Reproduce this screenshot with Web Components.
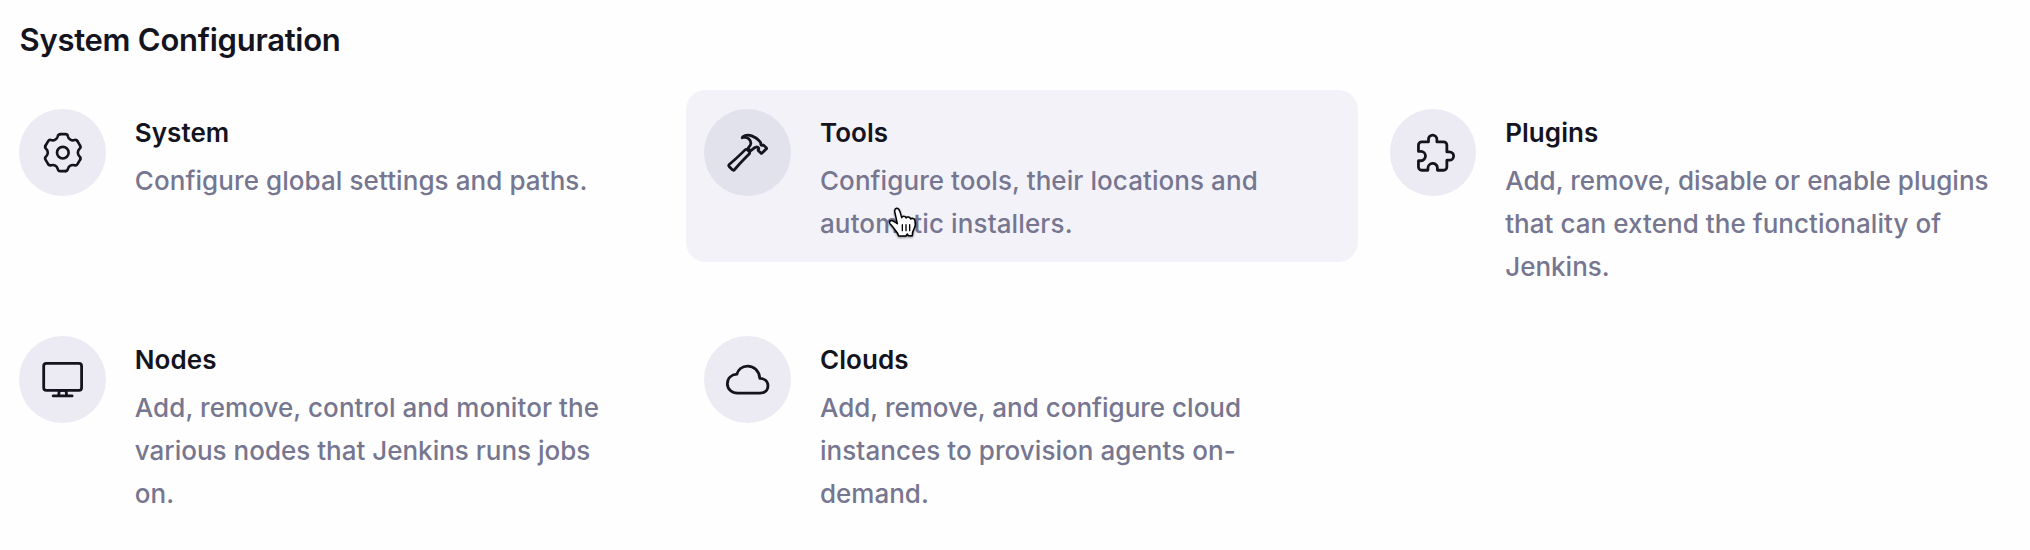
<!DOCTYPE html>
<html lang="en">
<head>
<meta charset="utf-8">
<title>System Configuration</title>
<style>
body{margin:0;background:#fefefe;font-family:Inter,"Noto Sans",sans-serif;color:#14141f}
</style>
</head>
<body>
<config-section heading="System Configuration">
  <config-item icon="gear" heading="System"><text-line track=".08">Configure global settings and paths.</text-line></config-item>
  <config-item icon="hammer" heading="Tools" active><text-line track=".07">Configure tools, their locations and</text-line><text-line track=".12">automatic installers.</text-line><hand-cursor slot="pointer"></hand-cursor></config-item>
  <config-item icon="puzzle" heading="Plugins"><text-line track=".03">Add, remove, disable or enable plugins</text-line><text-line track=".05">that can extend the functionality of</text-line><text-line>Jenkins.</text-line></config-item>
  <config-item icon="desktop" heading="Nodes"><text-line track=".07">Add, remove, control and monitor the</text-line><text-line>various nodes that Jenkins runs jobs</text-line><text-line>on.</text-line></config-item>
  <config-item icon="cloud" heading="Clouds"><text-line>Add, remove, and configure cloud</text-line><text-line track=".06">instances to provision agents on-</text-line><text-line>demand.</text-line></config-item>
</config-section>
<script>
const tooth = '<path d="M-8-55H8Q14-55 15-49C17-40 26.1-34.7 34.9-37.5Q40.6-39.6 43.6-34.4"';
const icons = {
  gear: `<g transform="translate(258 256) scale(3.97)" stroke-width="7.8">${[0,60,120,180,240,300].map(a => `${tooth} transform="rotate(${a})"/>`).join('')}<circle r="17.3"/></g>`,
  hammer: '<path d="M277.42 247a24.68 24.68 0 00-4.08-5.47L255 223.44a21.63 21.63 0 00-6.56-4.57 20.93 20.93 0 00-23.28 4.27c-6.36 6.26-18 17.68-39 38.43C146 301.3 71.43 367.89 37.71 396.29a16 16 0 00-1.09 23.54l39 39.43a16.13 16.13 0 0023.67-.89c29.24-34.37 96.3-109 136-148.23 20.39-20.06 31.82-31.58 38.29-37.94a21.76 21.76 0 003.84-25.2zM478.43 201l-34.31-34a5.44 5.44 0 00-4-1.59 5.59 5.59 0 00-4 1.59h0a11.41 11.41 0 01-9.55 3.27c-4.48-.49-9.25-1.88-12.33-4.86-7-6.86 1.09-20.36-5.07-29a242.88 242.88 0 00-23.08-26.72c-7.06-7-34.81-33.47-81.55-52.53a123.79 123.79 0 00-47-9.24c-26.35 0-46.61 11.76-54 18.51-5.88 5.32-12 13.77-12 13.77a91.29 91.29 0 0110.81-3.2 79.53 79.53 0 0123.28-1.49C241.19 76.8 259.94 84.1 270 92c16.21 13 23.18 30.39 24.27 52.83.8 16.69-15.23 37.76-30.44 54.94a7.85 7.85 0 00.4 10.83l21.24 21.23a8 8 0 0011.14.1c13.93-13.51 31.09-28.47 40.82-34.46s17.58-7.68 21.35-8.09a35.71 35.71 0 0121.3 4.62 13.65 13.65 0 013.08 2.38c6.46 6.56 6.07 17.28-.5 23.74l-2 1.89a5.5 5.5 0 000 7.84l34.31 34a5.5 5.5 0 004 1.58 5.65 5.65 0 004-1.58L478.43 209a5.82 5.82 0 000-8z"/>',
  puzzle: '<path transform="translate(40 0)" d="M413.66 246.1H386a2 2 0 01-2-2v-77.24A38.86 38.86 0 00345.14 128H267.9a2 2 0 01-2-2V98.34c0-27.14-21.5-49.86-48.64-50.33a49.53 49.53 0 00-50.4 49.51V126a2 2 0 01-2 2H87.62A39.74 39.74 0 0048 167.62V238a2 2 0 002 2h26.91c29.37 0 53.68 25.48 54.09 54.85.42 29.87-23.51 57.15-53.29 57.15H50a2 2 0 00-2 2v70.38A39.74 39.74 0 0087.62 464H158a2 2 0 002-2v-20.93c0-30.28 24.75-56.35 55-57.06 30.1-.7 57 20.31 57 50.28V462a2 2 0 002 2h71.14A38.86 38.86 0 00384 425.14v-78a2 2 0 012-2h28.48c27.63 0 49.52-22.67 49.52-50.4s-23.2-48.64-50.34-48.64z"/>',
  desktop: '<rect x="32" y="64" width="448" height="320" rx="32"/><path d="M304 448l-8-64h-80l-8 64h96zM368 448H144"/>',
  cloud: '<path d="M400 240c-8.89-89.54-71-144-144-144-69 0-113.44 48.2-128 96-60 6-112 43.59-112 112 0 66 54 112 120 112h260c55 0 100-27.44 100-88 0-59.82-53-85.76-96-88z"/>'
};

customElements.define('config-icon', class extends HTMLElement {
  connectedCallback() {
    this.attachShadow({mode:'open'}).innerHTML = `<style>
      :host{display:flex;align-items:center;justify-content:center;flex:none;width:86.5px;height:86.5px;border-radius:50%;background:var(--disc,#ecebf4)}
      svg{width:43.3px;height:43.3px;overflow:visible;fill:none;stroke:#14141f;stroke-width:33;stroke-linecap:round;stroke-linejoin:round}
    </style><svg viewBox="0 0 512 512">${icons[this.getAttribute('name')]}</svg>`;
  }
});

customElements.define('text-line', class extends HTMLElement {
  connectedCallback() {
    this.attachShadow({mode:'open'}).innerHTML = `<style>:host{display:block;white-space:nowrap;letter-spacing:${this.getAttribute('track') || 0}px}</style><slot></slot>`;
  }
});

customElements.define('hand-cursor', class extends HTMLElement {
  connectedCallback() {
    this.attachShadow({mode:'open'}).innerHTML = `<style>
      :host{display:block;position:absolute;left:201.5px;top:116.5px;width:30px;height:32px}
      svg{display:block;overflow:visible;filter:drop-shadow(0 1.5px 1px rgba(0,0,0,.45))}
    </style><svg width="30" height="32" viewBox="84 48 90 96" fill="none" stroke="#000" stroke-linejoin="round" stroke-linecap="round">
      <path fill="#fff" stroke-width="4.5" d="M112 98L105 66C103 59 104 53 110 52C116 52 118 56 120 62L125 80C127 74 137 74 138 81C141 76 150 77 152 84C157 80 164 83 165 90C167 98 167 106 162 114C158 120 157 126 157 134H145L142 129L138 135H116C114 126 108 120 103 114C98 106 96 104 90 98C86 93 90 87 97 89C103 91 107 94 112 98Z"/>
      <path stroke-width="4" d="M127 101V119M138 101V119M149 101V119"/></svg>`;
  }
});

customElements.define('config-item', class extends HTMLElement {
  connectedCallback() {
    this.attachShadow({mode:'open'}).innerHTML = `<style>
      :host{display:flex;position:relative;align-self:start;box-sizing:border-box;gap:29px;padding:19px 18px 17px;border-radius:20px}
      :host([active]){background:#f3f2f8;--disc:#e2e2ed}
      .body{padding-top:2px}
      h3{margin:0;font-size:26px;font-weight:600;line-height:43px;letter-spacing:.05px}
      .text{margin-top:5px;font-size:26px;font-weight:500;line-height:43px;color:#767690}
    </style>
    <config-icon name="${this.getAttribute('icon')}"></config-icon>
    <div class="body"><h3>${this.getAttribute('heading')}</h3><div class="text"><slot></slot></div></div>
    <slot name="pointer"></slot>`;
  }
});

customElements.define('config-section', class extends HTMLElement {
  connectedCallback() {
    this.attachShadow({mode:'open'}).innerHTML = `<style>
      :host{display:block;height:550px;overflow:hidden}
      h2{margin:0;padding:20px 0 0 19.5px;height:70px;font-size:31px;line-height:40px;font-weight:600;letter-spacing:-.26px}
      .grid{display:grid;grid-template-columns:repeat(3,671.5px);column-gap:13.7px;grid-auto-rows:227.4px;padding-left:1.3px}
    </style><h2>${this.getAttribute('heading')}</h2><div class="grid"><slot></slot></div>`;
  }
});
</script>
</body>
</html>
